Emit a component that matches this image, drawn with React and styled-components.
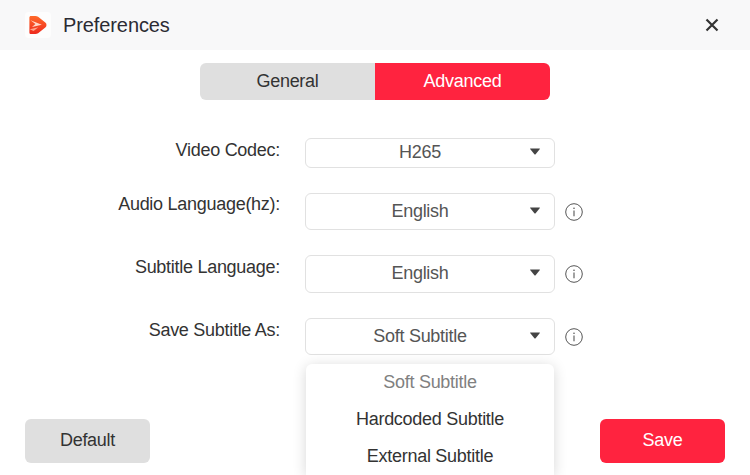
import React from "react";
import styled, { createGlobalStyle } from "styled-components";

const GlobalStyle = createGlobalStyle`
  html, body {
    margin: 0;
    padding: 0;
    background: #fff;
  }
  body {
    font-family: "Liberation Sans", Arial, sans-serif;
    overflow: hidden;
  }
`;

function Logo() {
  return (
    <svg width="20" height="20" viewBox="0 0 20 20">
      <defs>
        <linearGradient id="logoFill" x1="0" y1="0" x2="0" y2="1">
          <stop offset="0" stopColor="#ff6a2a" />
          <stop offset="1" stopColor="#ee2a1e" />
        </linearGradient>
      </defs>
      <path
        d="M3 1h4.400c1 0 1.900.3 2.700.8l7.200 5.600c1.600 1.200 1.600 3.800 0 5l-7.200 5.800c-.8.6-1.700.8-2.700.8H3c-1 0-1.600-.6-1.600-1.600V2.600C1.400 1.600 2 1 3 1z"
        fill="url(#logoFill)"
      />
      <path d="M2.500 5.300l11.300 4.400-9.800 2.200 3.400-2.900z" fill="#ffd8c9" />
      <path d="M1.800 14.200l8.600-2-4.800 3.800z" fill="#ffa58c" />
    </svg>
  );
}

function CloseIcon() {
  return (
    <svg width="14" height="14" viewBox="0 0 14 14">
      <path d="M1.500 1.500l11 11M12.500 1.500l-11 11" stroke="#333" strokeWidth="2.200" fill="none" />
    </svg>
  );
}

function InfoIcon() {
  return (
    <svg width="18" height="18" viewBox="0 0 18 18">
      <circle cx="9" cy="9" r="8.300" fill="none" stroke="#555" strokeWidth="1" />
      <path d="M9 7.600v5.600" stroke="#555" strokeWidth="1.100" />
      <circle cx="9" cy="5.200" r="0.800" fill="#555" />
    </svg>
  );
}

function Caret() {
  return (
    <CaretIcon width="10" height="7" viewBox="0 0 10 7">
      <path d="M0.400 0.400h9.200c.3 0 .4.300.3.500L5.400 6.400c-.2.200-.6.200-.8 0L.1.900C0 .7.100.4.400.4z" fill="#444" />
    </CaretIcon>
  );
}

function Row({ label, value, height, labelTop, info, gap }) {
  return (
    <FormRow $gap={gap}>
      <Label $top={labelTop}>{label}</Label>
      <Select $height={height}>
        <SelectValue $odd={height === 37}>{value}</SelectValue>
        <Caret />
      </Select>
      {info && (
        <InfoSlot>
          <InfoIcon />
        </InfoSlot>
      )}
    </FormRow>
  );
}

export default function App() {
  return (
    <Window>
      <GlobalStyle />
      <Header>
        <LogoTile>
          <Logo />
        </LogoTile>
        <Title>Preferences</Title>
        <CloseButton>
          <CloseIcon />
        </CloseButton>
      </Header>

      <Tabs>
        <Tab>General</Tab>
        <Tab $active>Advanced</Tab>
      </Tabs>

      <Form>
        <Row label="Video Codec:" value="H265" height={30} labelTop={2} gap={0} />
        <Row label="Audio Language(hz):" value="English" height={37} labelTop={1} info gap={25} />
        <Row label="Subtitle Language:" value="English" height={38} labelTop={2} info gap={25} />
        <Row label="Save Subtitle As:" value="Soft Subtitle" height={37} labelTop={2} info gap={25} />
      </Form>

      <Footer>
        <FooterButton>Default</FooterButton>
        <FooterButton $primary>Save</FooterButton>
      </Footer>

      <Menu>
        <MenuItem $selected>Soft Subtitle</MenuItem>
        <MenuItem>Hardcoded Subtitle</MenuItem>
        <MenuItem>External Subtitle</MenuItem>
      </Menu>
    </Window>
  );
}

const Window = styled.div`
  position: relative;
  width: 750px;
  height: 475px;
  overflow: hidden;
  background: #fff;
  display: flex;
  flex-direction: column;
`;

const Header = styled.div`
  height: 50px;
  flex-shrink: 0;
  display: flex;
  align-items: center;
  padding: 0 31px 0 25px;
  background: #f8f8f9;
`;

const LogoTile = styled.div`
  width: 26px;
  height: 26px;
  border-radius: 4px;
  background: #fdfdfd;
  display: flex;
  align-items: center;
  justify-content: center;
`;

const Title = styled.div`
  margin-left: 12px;
  font-size: 20px;
  letter-spacing: -0.100px;
  color: #2b2b33;
`;

const CloseButton = styled.div`
  margin-left: auto;
  display: flex;
`;

const Tabs = styled.div`
  display: flex;
  align-self: center;
  width: 350px;
  height: 37px;
  margin-top: 13px;
  border-radius: 6px;
  overflow: hidden;
`;

const Tab = styled.div`
  flex: 1;
  display: flex;
  align-items: center;
  justify-content: center;
  font-size: 18px;
  letter-spacing: -0.280px;
  color: ${(p) => (p.$active ? "#fff" : "#333")};
  background: ${(p) => (p.$active ? "#ff233f" : "#dfdfdf")};
`;

const Form = styled.div`
  display: flex;
  flex-direction: column;
  margin-top: 38px;
`;

const FormRow = styled.div`
  display: flex;
  align-items: flex-start;
  margin-top: ${(p) => p.$gap}px;
`;

const Label = styled.div`
  width: 280px;
  text-align: right;
  font-size: 18px;
  letter-spacing: -0.280px;
  line-height: 21px;
  color: #333;
  padding-top: ${(p) => p.$top}px;
`;

const Select = styled.div`
  box-sizing: border-box;
  width: 250px;
  height: ${(p) => p.$height}px;
  margin-left: 25px;
  padding: 0 14px 0 0;
  display: flex;
  align-items: center;
  border: 1px solid #e1e1e1;
  border-radius: 6px;
  background: #fff;
`;

const SelectValue = styled.div`
  flex: 1;
  padding: 0 0 ${(p) => (p.$odd ? 0 : 2)}px 4px;
  text-align: center;
  font-size: 18px;
  letter-spacing: -0.280px;
  color: #555;
`;

const CaretIcon = styled.svg`
  flex-shrink: 0;
  margin-top: -3px;
`;

const InfoSlot = styled.div`
  display: flex;
  align-self: center;
  margin-left: 10px;
`;

const Footer = styled.div`
  display: flex;
  justify-content: space-between;
  margin-top: auto;
  padding: 0 25px 12px;
`;

const FooterButton = styled.div`
  box-sizing: border-box;
  width: 125px;
  height: 44px;
  padding-bottom: 2px;
  border-radius: 6px;
  display: flex;
  align-items: center;
  justify-content: center;
  font-size: 18px;
  letter-spacing: -0.280px;
  color: ${(p) => (p.$primary ? "#fff" : "#333")};
  background: ${(p) => (p.$primary ? "#ff233f" : "#dfdfdf")};
`;

const Menu = styled.div`
  position: absolute;
  left: 306px;
  top: 364px;
  width: 248px;
  height: 111px;
  background: #fff;
  border-radius: 6px 6px 0 0;
  box-shadow: 0 2px 14px rgba(0, 0, 0, 0.16);
`;

const MenuItem = styled.div`
  box-sizing: border-box;
  height: 37px;
  padding-bottom: 1px;
  display: flex;
  align-items: center;
  justify-content: center;
  font-size: 18px;
  letter-spacing: -0.280px;
  color: ${(p) => (p.$selected ? "#808080" : "#333")};
`;
